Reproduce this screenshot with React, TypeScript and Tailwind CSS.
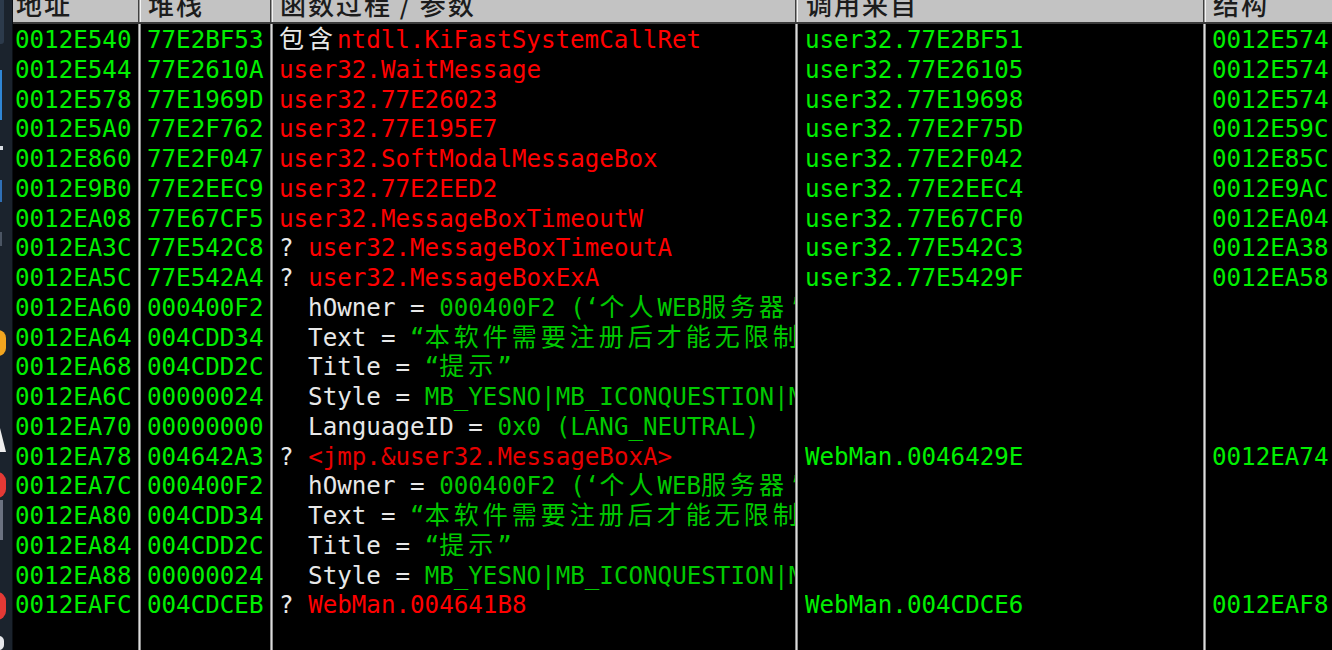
import React from "react";

type Seg = { t: string; c: string };
type Row = { addr: string; stack: string; fn: Seg[]; from?: string; frame?: string };

const G = "text-[#00f000]";
const V = "text-[#00c800]";
const R = "text-[#ff0000]";
const W = "text-[#e8e8e8]";

const hOwner: Seg[] = [
  { t: "  hOwner = ", c: W },
  { t: "000400F2 (‘个人WEB服务器’,class='Afx:400000:0')", c: V },
];
const textArg: Seg[] = [
  { t: "  Text = ", c: W },
  { t: "“本软件需要注册后才能无限制使用！”", c: V },
];
const titleArg: Seg[] = [
  { t: "  Title = ", c: W },
  { t: "“提示”", c: V },
];
const styleArg: Seg[] = [
  { t: "  Style = ", c: W },
  { t: "MB_YESNO|MB_ICONQUESTION|MB_APPLMODAL", c: V },
];

const rows: Row[] = [
  { addr: "0012E540", stack: "77E2BF53", fn: [{ t: "包含", c: W }, { t: "ntdll.KiFastSystemCallRet", c: R }], from: "user32.77E2BF51", frame: "0012E574" },
  { addr: "0012E544", stack: "77E2610A", fn: [{ t: "user32.WaitMessage", c: R }], from: "user32.77E26105", frame: "0012E574" },
  { addr: "0012E578", stack: "77E1969D", fn: [{ t: "user32.77E26023", c: R }], from: "user32.77E19698", frame: "0012E574" },
  { addr: "0012E5A0", stack: "77E2F762", fn: [{ t: "user32.77E195E7", c: R }], from: "user32.77E2F75D", frame: "0012E59C" },
  { addr: "0012E860", stack: "77E2F047", fn: [{ t: "user32.SoftModalMessageBox", c: R }], from: "user32.77E2F042", frame: "0012E85C" },
  { addr: "0012E9B0", stack: "77E2EEC9", fn: [{ t: "user32.77E2EED2", c: R }], from: "user32.77E2EEC4", frame: "0012E9AC" },
  { addr: "0012EA08", stack: "77E67CF5", fn: [{ t: "user32.MessageBoxTimeoutW", c: R }], from: "user32.77E67CF0", frame: "0012EA04" },
  { addr: "0012EA3C", stack: "77E542C8", fn: [{ t: "? ", c: W }, { t: "user32.MessageBoxTimeoutA", c: R }], from: "user32.77E542C3", frame: "0012EA38" },
  { addr: "0012EA5C", stack: "77E542A4", fn: [{ t: "? ", c: W }, { t: "user32.MessageBoxExA", c: R }], from: "user32.77E5429F", frame: "0012EA58" },
  { addr: "0012EA60", stack: "000400F2", fn: hOwner },
  { addr: "0012EA64", stack: "004CDD34", fn: textArg },
  { addr: "0012EA68", stack: "004CDD2C", fn: titleArg },
  { addr: "0012EA6C", stack: "00000024", fn: styleArg },
  { addr: "0012EA70", stack: "00000000", fn: [{ t: "  LanguageID = ", c: W }, { t: "0x0 (LANG_NEUTRAL)", c: V }] },
  { addr: "0012EA78", stack: "004642A3", fn: [{ t: "? ", c: W }, { t: "<jmp.&user32.MessageBoxA>", c: "text-[#e80000]" }], from: "WebMan.0046429E", frame: "0012EA74" },
  { addr: "0012EA7C", stack: "000400F2", fn: hOwner },
  { addr: "0012EA80", stack: "004CDD34", fn: textArg },
  { addr: "0012EA84", stack: "004CDD2C", fn: titleArg },
  { addr: "0012EA88", stack: "00000024", fn: styleArg },
  { addr: "0012EAFC", stack: "004CDCEB", fn: [{ t: "? ", c: W }, { t: "WebMan.004641B8", c: R }], from: "WebMan.004CDCE6", frame: "0012EAF8" },
];

const CELL = "h-[29.75px] leading-[29.75px] whitespace-pre overflow-hidden";
const CJK = /[\u3000-\u9fff\uff00-\uffef]/;

// split latin / CJK runs so ideographs take two cells like the debugger font
const Mixed = ({ text }: { text: string }) => {
  const parts = text.match(/[\u3000-\u9fff\uff00-\uffef]+|[^\u3000-\u9fff\uff00-\uffef]+/g) || [];
  return (
    <>
      {parts.map((p, i) =>
        CJK.test(p) ? (
          <span key={i} className="font-['Noto_Sans_CJK_SC',sans-serif] text-[25px] leading-[18px] tracking-[4px]">
            {p}
          </span>
        ) : (
          <span key={i}>{p}</span>
        )
      )}
    </>
  );
};

const BodyDivider = () => (
  <div className="w-[3px] shrink-0 border-x border-x-[#8a8a8a] bg-[#dcdcdc]" />
);

const HeadDivider = () => (
  <div className="w-[3px] shrink-0 border-l border-l-[#404040] border-r border-r-[#f4f4f4] bg-[#9a9a9a]" />
);

const HeadCell = ({ w, label }: { w: string; label: string }) => (
  <div className={`${w} shrink-0 h-[22px] overflow-hidden`}>
    <div className="-mt-[11px] pl-[3px] leading-[30px] whitespace-pre font-['Noto_Sans_CJK_SC',sans-serif] font-medium text-[26px] tracking-[2px] text-[#1c1c1c]">
      {label}
    </div>
  </div>
);

const Desktop = () => (
  <div className="relative w-[13px] shrink-0 bg-[#1b232d] border-r border-r-[#0b0f14]">
    <div className="absolute left-0 top-0 w-[4px] h-[44px] rounded-br-[3px] bg-[#2c3a4b]" />
    <div className="absolute left-0 top-[70px] w-[2px] h-[50px] bg-[#2f86d6]" />
    <div className="absolute left-0 top-[146px] w-[3px] h-[4px] bg-[#d8dde3]" />
    <div className="absolute left-0 top-[180px] w-[2px] h-[22px] bg-[#2f6fb5]" />
    <div className="absolute left-0 top-[232px] w-[2px] h-[14px] bg-[#4b5563]" />
    <div className="absolute -left-[10px] top-[330px] w-[16px] h-[26px] rounded-full bg-[#f2a51f]" />
    <div className="absolute left-0 top-[428px] w-0 h-0 border-b-[24px] border-b-[#eeeeee] border-r-[6px] border-r-transparent" />
    <div className="absolute -left-[12px] top-[472px] w-[18px] h-[26px] rounded-full bg-[#e53935]" />
    <div className="absolute left-0 top-[500px] w-[3px] h-[40px] bg-[#6b7280]" />
    <div className="absolute -left-[12px] top-[592px] w-[18px] h-[28px] rounded-full bg-[#e53935]" />
    <div className="absolute -left-[6px] top-[636px] w-[10px] h-[14px] rounded-full bg-[#e5e7eb]" />
  </div>
);

export default function App() {
  return (
    <div className="flex w-[1332px] h-[650px] overflow-hidden bg-black font-['DejaVu_Sans_Mono',monospace] text-[24.2px]">
      <Desktop />
      <div className="flex flex-col flex-1 min-w-0">
        <div className="flex h-[24px] shrink-0 bg-[#c3c3c3] border-b-2 border-b-[#3a3a3a]">
          <HeadCell w="w-[125px]" label="地址" />
          <HeadDivider />
          <HeadCell w="w-[129px] pl-[4px]" label="堆栈" />
          <HeadDivider />
          <HeadCell w="w-[522px] pl-[4px]" label="函数过程 / 参数" />
          <HeadDivider />
          <HeadCell w="w-[405px] pl-[5px]" label="调用来自" />
          <HeadDivider />
          <HeadCell w="flex-1 pl-[4px]" label="结构" />
        </div>
        <div className="flex flex-1 min-h-0">
          <div className="w-[125px] shrink-0 pt-[2px] pl-[2px]">
            {rows.map((r, i) => (
              <div key={i} className={`${CELL} ${G}`}>{r.addr}</div>
            ))}
          </div>
          <BodyDivider />
          <div className="w-[129px] shrink-0 pt-[2px] pl-[6px]">
            {rows.map((r, i) => (
              <div key={i} className={`${CELL} ${G}`}>{r.stack}</div>
            ))}
          </div>
          <BodyDivider />
          <div className="w-[522px] shrink-0 pt-[2px] pl-[6px] overflow-hidden">
            {rows.map((r, i) => (
              <div key={i} className={CELL}>
                {r.fn.map((s, j) => (
                  <span key={j} className={s.c}>
                    <Mixed text={s.t} />
                  </span>
                ))}
              </div>
            ))}
          </div>
          <BodyDivider />
          <div className="w-[405px] shrink-0 pt-[2px] pl-[7px]">
            {rows.map((r, i) => (
              <div key={i} className={`${CELL} ${G}`}>{r.from ?? ""}</div>
            ))}
          </div>
          <BodyDivider />
          <div className="flex-1 min-w-0 pt-[2px] pl-[6px] overflow-hidden">
            {rows.map((r, i) => (
              <div key={i} className={`${CELL} ${G}`}>{r.frame ?? ""}</div>
            ))}
          </div>
        </div>
      </div>
    </div>
  );
}
